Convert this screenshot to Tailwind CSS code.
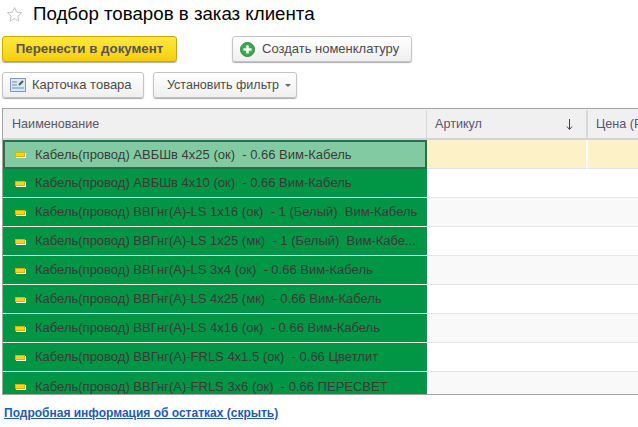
<!DOCTYPE html>
<html lang="ru">
<head>
    <meta charset="UTF-8">
    <title>Подбор товаров</title>
    <script src="https://cdn.jsdelivr.net/npm/@tailwindcss/browser@4"></script>
</head>
<body class="w-[638px] h-[427px] overflow-hidden bg-white font-['Liberation_Sans',Arial,sans-serif] text-[13px] text-[#4b4b4b]">
    <div class="flex items-center h-[28px] pl-[6px] gap-[10px]">
        <svg width="17" height="17" viewBox="0 0 17 17"><path d="M8.5 1.5l2.1 4.6 5 .6-3.700 3.400 1 5-4.400-2.500-4.400 2.500 1-5L1.400 6.700l5-.6z" fill="#fff" stroke="#c4c4c4"/></svg>
        <h1 class="text-[18.700px] text-black">Подбор товаров в заказ клиента</h1>
    </div>
    <div class="flex h-[26px] mt-[8px] pl-[2px]">
        <button class="w-[175px] rounded-[3px] border border-[#c9a800] bg-gradient-to-b from-[#ffe83a] to-[#f5d000] font-bold text-[#555] text-[13.300px] shadow-[0_1px_1px_#aaa]">Перенести в документ</button>
        <button class="flex items-center w-[180px] ml-[55px] pl-[7px] gap-[7px] rounded-[3px] border border-[#c4c4c4] bg-gradient-to-b from-white to-[#efefef] shadow-[0_1px_1px_#aaa]">
            <svg width="15" height="15" viewBox="0 0 15 15"><circle cx="7.500" cy="7.500" r="7" fill="#3fa84f" stroke="#2d8a3e"/><path d="M7.500 3.500v8M3.500 7.500h8" stroke="#fff" stroke-width="2.500"/></svg>
            <span>Создать номенклатуру</span>
        </button>
    </div>
    <div class="flex h-[26px] mt-[10px] pl-[2px]">
        <button class="flex items-center w-[142px] pl-[7px] gap-[6px] rounded-[3px] border border-[#c4c4c4] bg-gradient-to-b from-white to-[#efefef] shadow-[0_1px_1px_#aaa]">
            <svg width="16" height="14" viewBox="0 0 16 14"><rect x=".5" y=".5" width="15" height="13" fill="#dbe8f4" stroke="#7c9bb8"/><path d="M2 4h5M2 7h5M2 10h12" stroke="#6f8fae"/><path d="M9 7l4-4" stroke="#555" stroke-width="2"/></svg>
            <span>Карточка товара</span>
        </button>
        <button class="flex items-center w-[144px] ml-[9px] pl-[13px] gap-[6px] rounded-[3px] border border-[#c4c4c4] bg-gradient-to-b from-white to-[#efefef] shadow-[0_1px_1px_#aaa] text-[12.500px]">
            <span>Установить фильтр</span>
            <span class="w-0 h-0 border-x-[3px] border-x-transparent border-t-[3px] border-t-[#666]"></span>
        </button>
    </div>
    <div class="ml-[2px] mt-[10px] h-[287px] border-t border-l border-b border-[#a3a3a3] overflow-hidden">
        <div class="flex h-[31px] pt-[1px] bg-[#f0f0f0] border-b-2 border-[#d3d3d3] text-[#5a5470] text-[12.600px]">
            <div class="w-[424px] pl-[9px] flex items-center border-r border-[#d8d8d8]">Наименование</div>
            <div class="w-[161px] pl-[8px] pr-[13px] flex items-center justify-between border-r-2 border-[#d8d8d8]">
                <span>Артикул</span>
                <svg width="7" height="11" viewBox="0 0 7 11"><path d="M3.500 0v10M1 7.500l2.500 3 2.500-3" fill="none" stroke="#444"/></svg>
            </div>
            <div class="flex-1 pl-[8px] flex items-center whitespace-nowrap overflow-hidden">Цена (Р</div>
        </div>
        <div class="flex h-[29px]">
            <div class="w-[424px] flex items-center pl-[10px] gap-[10px] bg-[#82cba2] border-[2px] border-[#2a6e4c] text-[#3b3b3b]"><span class="w-[10px] h-[5px] bg-[#f6d21c] border border-[#d9b400] shadow-[1px_1px_0_#fff]"></span>Кабель(провод) АВБШв 4х25 (ок)&nbsp; - 0.66 Вим-Кабель</div>
            <div class="w-[161px] bg-[#fdf1c7] border-r-2 border-b border-white border-b-[#e4e4e4]"></div>
            <div class="flex-1 bg-[#fdf1c7] border-b border-[#e4e4e4]"></div>
        </div>
        <div class="flex h-[29px]">
            <div class="w-[424px] flex items-center pl-[12px] gap-[10px] bg-[#009646] border-b border-[#eef5ef] text-[#3a3a3a] whitespace-nowrap"><span class="w-[10px] h-[5px] bg-[#f6d21c] border border-[#d9b400] shadow-[1px_1px_0_#fff]"></span>Кабель(провод) АВБШв 4х10 (ок)&nbsp; - 0.66 Вим-Кабель</div>
            <div class="flex-1 border-b border-[#e4e4e4]"></div>
        </div>
        <div class="flex h-[29px] bg-[#f9f9f9]">
            <div class="w-[424px] flex items-center pl-[12px] gap-[10px] bg-[#009646] border-b border-[#eef5ef] text-[#3a3a3a] whitespace-nowrap"><span class="w-[10px] h-[5px] bg-[#f6d21c] border border-[#d9b400] shadow-[1px_1px_0_#fff]"></span>Кабель(провод) ВВГнг(А)-LS 1х16 (ок)&nbsp; - 1 (Белый)&nbsp; Вим-Кабель</div>
            <div class="flex-1 border-b border-[#e4e4e4]"></div>
        </div>
        <div class="flex h-[29px]">
            <div class="w-[424px] flex items-center pl-[12px] gap-[10px] bg-[#009646] border-b border-[#eef5ef] text-[#3a3a3a] whitespace-nowrap"><span class="w-[10px] h-[5px] bg-[#f6d21c] border border-[#d9b400] shadow-[1px_1px_0_#fff]"></span>Кабель(провод) ВВГнг(А)-LS 1х25 (мк)&nbsp; - 1 (Белый)&nbsp; Вим-Кабе...</div>
            <div class="flex-1 border-b border-[#e4e4e4]"></div>
        </div>
        <div class="flex h-[29px] bg-[#f9f9f9]">
            <div class="w-[424px] flex items-center pl-[12px] gap-[10px] bg-[#009646] border-b border-[#eef5ef] text-[#3a3a3a] whitespace-nowrap"><span class="w-[10px] h-[5px] bg-[#f6d21c] border border-[#d9b400] shadow-[1px_1px_0_#fff]"></span>Кабель(провод) ВВГнг(А)-LS 3х4 (ок)&nbsp; - 0.66 Вим-Кабель</div>
            <div class="flex-1 border-b border-[#e4e4e4]"></div>
        </div>
        <div class="flex h-[29px]">
            <div class="w-[424px] flex items-center pl-[12px] gap-[10px] bg-[#009646] border-b border-[#eef5ef] text-[#3a3a3a] whitespace-nowrap"><span class="w-[10px] h-[5px] bg-[#f6d21c] border border-[#d9b400] shadow-[1px_1px_0_#fff]"></span>Кабель(провод) ВВГнг(А)-LS 4х25 (мк)&nbsp; - 0.66 Вим-Кабель</div>
            <div class="flex-1 border-b border-[#e4e4e4]"></div>
        </div>
        <div class="flex h-[29px] bg-[#f9f9f9]">
            <div class="w-[424px] flex items-center pl-[12px] gap-[10px] bg-[#009646] border-b border-[#eef5ef] text-[#3a3a3a] whitespace-nowrap"><span class="w-[10px] h-[5px] bg-[#f6d21c] border border-[#d9b400] shadow-[1px_1px_0_#fff]"></span>Кабель(провод) ВВГнг(А)-LS 4х16 (ок)&nbsp; - 0.66 Вим-Кабель</div>
            <div class="flex-1 border-b border-[#e4e4e4]"></div>
        </div>
        <div class="flex h-[29px]">
            <div class="w-[424px] flex items-center pl-[12px] gap-[10px] bg-[#009646] border-b border-[#eef5ef] text-[#3a3a3a] whitespace-nowrap"><span class="w-[10px] h-[5px] bg-[#f6d21c] border border-[#d9b400] shadow-[1px_1px_0_#fff]"></span>Кабель(провод) ВВГнг(А)-FRLS 4х1.5 (ок)&nbsp; - 0.66 Цветлит</div>
            <div class="flex-1 border-b border-[#e4e4e4]"></div>
        </div>
        <div class="flex h-[29px] bg-[#f9f9f9]">
            <div class="w-[424px] flex items-center pl-[12px] gap-[10px] bg-[#009646] text-[#3a3a3a] whitespace-nowrap"><span class="w-[10px] h-[5px] bg-[#f6d21c] border border-[#d9b400] shadow-[1px_1px_0_#fff]"></span>Кабель(провод) ВВГнг(А)-FRLS 3х6 (ок)&nbsp; - 0.66 ПЕРЕСВЕТ</div>
            <div class="flex-1"></div>
        </div>
    </div>
    <a class="block mt-[9px] ml-[4px] font-bold text-[12px] text-[#1f5bb5] underline">Подробная информация об остатках (скрыть)</a>
</body>
</html>
